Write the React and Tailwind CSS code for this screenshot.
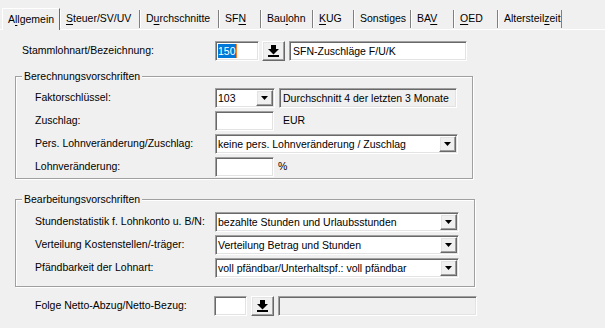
import React from 'react';

const sunken =
  'border border-t-[#a0a0a0] border-l-[#a0a0a0] border-r-white border-b-white shadow-[inset_1px_1px_0_#696969,inset_-1px_-1px_0_#e3e3e3]';
const raised =
  'border border-t-white border-l-white border-r-[#696969] border-b-[#696969] shadow-[inset_-1px_-1px_0_#a0a0a0,inset_1px_1px_0_#e3e3e3]';

const tabs = [
  { pre: 'A', u: 'l', post: 'lgemein', w: 'w-[58px]', active: true },
  { pre: '', u: 'S', post: 'teuer/SV/UV', w: 'w-[80px]' },
  { pre: 'D', u: 'u', post: 'rchschnitte', w: 'w-[79px]' },
  { pre: 'SF', u: 'N', post: '', w: 'w-[42px]' },
  { pre: 'Bau', u: 'l', post: 'ohn', w: 'w-[52px]' },
  { pre: '', u: 'K', post: 'UG', w: 'w-[41px]' },
  { pre: 'Sonstiges', u: '', post: '', w: 'w-[57px]' },
  { pre: 'BA', u: 'V', post: '', w: 'w-[43px]' },
  { pre: '', u: 'O', post: 'ED', w: 'w-[44px]' },
  { pre: 'Altersteil', u: 'z', post: 'eit', w: 'w-[64px]' },
];

function PickIcon() {
  return (
    <svg width="11" height="12" viewBox="0 0 11 12">
      <rect x="3" y="0" width="5" height="4" fill="#000" />
      <polygon points="0,4 11,4 5.5,9.5" fill="#000" />
      <rect x="0" y="10" width="11" height="2" fill="#000" />
    </svg>
  );
}

function PickButton() {
  return (
    <div className={`${raised} w-[23px] h-[20px] bg-[#f0f0f0] flex items-center justify-center`}>
      <PickIcon />
    </div>
  );
}

function Combo({ value, w }) {
  return (
    <div className={`${sunken} ${w} h-[20px] bg-white p-[1px] flex items-stretch`}>
      <div className="flex-1 pl-[1px] leading-[16px] whitespace-nowrap overflow-hidden">{value}</div>
      <div className={`${raised} w-[17px] bg-[#f0f0f0] flex items-center justify-center`}>
        <svg width="7" height="4" viewBox="0 0 7 4">
          <polygon points="0,0 7,0 3.5,4" fill="#000" />
        </svg>
      </div>
    </div>
  );
}

function Field({ w, value, readOnly }) {
  return (
    <div
      className={`${sunken} ${w} h-[20px] ${readOnly ? 'bg-[#f0f0f0]' : 'bg-white'} px-[3px] leading-[18px] whitespace-nowrap overflow-hidden`}
    >
      {value}
    </div>
  );
}

function Group({ title, children, className }) {
  return (
    <div
      className={`relative ml-[15px] border border-[#a0a0a0] shadow-[inset_1px_1px_0_#fff,1px_1px_0_#fff] ${className}`}
    >
      <span className="absolute left-[6px] top-[-8px] bg-[#f0f0f0] px-[2px] leading-[14px]">{title}</span>
      {children}
    </div>
  );
}

function Row({ label, children }) {
  return (
    <div className="flex items-center h-[20px]">
      <div className="w-[199px] pl-[19px] whitespace-nowrap">{label}</div>
      <div className="flex items-center">{children}</div>
    </div>
  );
}

export default function App() {
  return (
    <div
      className="w-[605px] h-[328px] bg-[#f0f0f0] text-[10.5px] text-black overflow-hidden"
      style={{ fontFamily: '"Liberation Sans", Arial, sans-serif' }}
    >
      {/* Tabs */}
      <div className="flex items-end h-[30px] pl-[2px] border-b border-b-white">
        {tabs.map((t, i) => (
          <div
            key={i}
            className={
              t.active
                ? `${t.w} h-[22px] mb-[-1px] bg-[#f0f0f0] border-l border-l-white border-t border-t-white border-r border-r-[#696969] pl-[5px] pt-[4px] leading-[13px]`
                : `${t.w} h-[18px] mb-[1px] border-l border-l-white border-r border-r-[#808080] pl-[5px] pt-[2px] leading-[13px]`
            }
          >
            {t.pre}
            {t.u && <span className="underline underline-offset-[2px]">{t.u}</span>}
            {t.post}
          </div>
        ))}
      </div>

      {/* Stammlohnart */}
      <div className="flex items-center mt-[11px] h-[20px]">
        <div className="w-[215px] pl-[22px]">Stammlohnart/Bezeichnung:</div>
        <div className={`${sunken} w-[44px] h-[20px] bg-white px-[2px] flex items-center`}>
          <span className="bg-[#0078d7] text-white leading-[14px]">150</span>
          <span className="w-[1px] h-[14px] bg-[#ff7f27]" />
        </div>
        <div className="ml-[3px]">
          <PickButton />
        </div>
        <div className="ml-[4px]">
          <Field w="w-[178px]" value="SFN-Zuschläge F/U/K" />
        </div>
      </div>

      {/* Berechnungsvorschriften */}
      <Group title="Berechnungsvorschriften" className="mt-[15px] w-[458px] h-[103px] pt-[11px] flex flex-col gap-[3px]">
        <Row label="Faktorschlüssel:">
          <Combo value="103" w="w-[60px]" />
          <div className="ml-[4px]">
            <Field w="w-[178px]" value="Durchschnitt 4 der letzten 3 Monate" readOnly />
          </div>
        </Row>
        <Row label="Zuschlag:">
          <Field w="w-[59px]" value="" />
          <span className="ml-[9px]">EUR</span>
        </Row>
        <Row label="Pers. Lohnveränderung/Zuschlag:">
          <Combo value="keine pers. Lohnveränderung / Zuschlag" w="w-[243px]" />
        </Row>
        <Row label="Lohnveränderung:">
          <Field w="w-[59px]" value="" />
          <span className="ml-[4px]">%</span>
        </Row>
      </Group>

      {/* Bearbeitungsvorschriften */}
      <Group title="Bearbeitungsvorschriften" className="mt-[20px] w-[460px] h-[88px] pt-[12px] flex flex-col gap-[3px]">
        <Row label="Stundenstatistik f. Lohnkonto u. B/N:">
          <Combo value="bezahlte Stunden und Urlaubsstunden" w="w-[244px]" />
        </Row>
        <Row label="Verteilung Kostenstellen/-träger:">
          <Combo value="Verteilung Betrag und Stunden" w="w-[244px]" />
        </Row>
        <Row label="Pfändbarkeit der Lohnart:">
          <Combo value="voll pfändbar/Unterhaltspf.: voll pfändbar" w="w-[244px]" />
        </Row>
      </Group>

      {/* Folge Netto */}
      <div className="flex items-center mt-[9px] h-[20px]">
        <div className="w-[214px] pl-[35px]">Folge Netto-Abzug/Netto-Bezug:</div>
        <Field w="w-[33px]" value="" />
        <div className="ml-[4px]">
          <PickButton />
        </div>
        <div className="ml-[4px]">
          <Field w="w-[199px]" value="" readOnly />
        </div>
      </div>
    </div>
  );
}
